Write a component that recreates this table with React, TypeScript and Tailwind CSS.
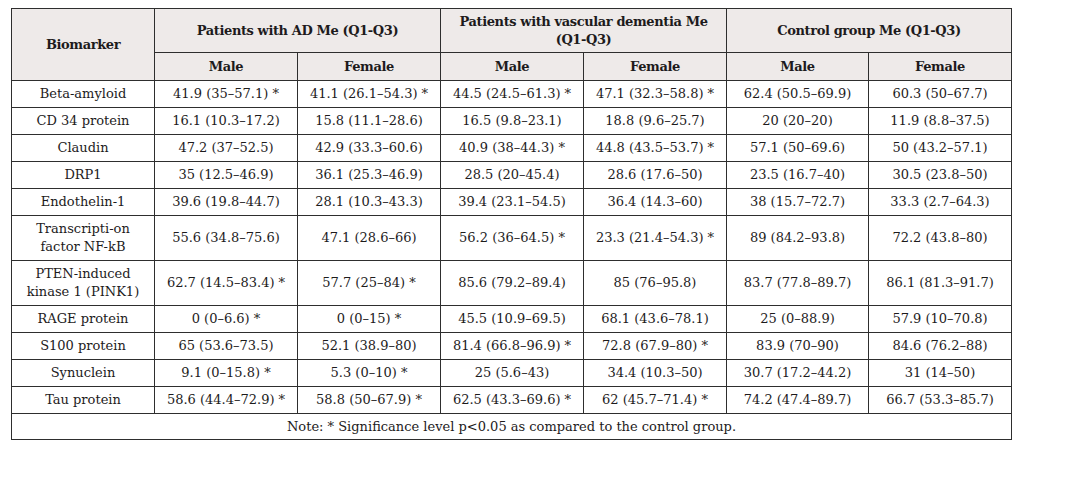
import React from "react";

type Row = { name: React.ReactNode; values: string[] };

const rows: Row[] = [
  {
    name: "Beta-amyloid",
    values: ["41.9 (35–57.1) *", "41.1 (26.1–54.3) *", "44.5 (24.5–61.3) *", "47.1 (32.3–58.8) *", "62.4 (50.5–69.9)", "60.3 (50–67.7)"],
  },
  {
    name: "CD 34 protein",
    values: ["16.1 (10.3–17.2)", "15.8 (11.1–28.6)", "16.5 (9.8–23.1)", "18.8 (9.6–25.7)", "20 (20–20)", "11.9 (8.8–37.5)"],
  },
  {
    name: "Claudin",
    values: ["47.2 (37–52.5)", "42.9 (33.3–60.6)", "40.9 (38–44.3) *", "44.8 (43.5–53.7) *", "57.1 (50–69.6)", "50 (43.2–57.1)"],
  },
  {
    name: "DRP1",
    values: ["35 (12.5–46.9)", "36.1 (25.3–46.9)", "28.5 (20–45.4)", "28.6 (17.6–50)", "23.5 (16.7–40)", "30.5 (23.8–50)"],
  },
  {
    name: "Endothelin-1",
    values: ["39.6 (19.8–44.7)", "28.1 (10.3–43.3)", "39.4 (23.1–54.5)", "36.4 (14.3–60)", "38 (15.7–72.7)", "33.3 (2.7–64.3)"],
  },
  {
    name: (
      <>
        Transcripti-on
        <br />
        factor NF-kB
      </>
    ),
    values: ["55.6 (34.8–75.6)", "47.1 (28.6–66)", "56.2 (36–64.5) *", "23.3 (21.4–54.3) *", "89 (84.2–93.8)", "72.2 (43.8–80)"],
  },
  {
    name: (
      <>
        PTEN-induced
        <br />
        kinase 1 (PINK1)
      </>
    ),
    values: ["62.7 (14.5–83.4) *", "57.7 (25–84) *", "85.6 (79.2–89.4)", "85 (76–95.8)", "83.7 (77.8–89.7)", "86.1 (81.3–91.7)"],
  },
  {
    name: "RAGE protein",
    values: ["0 (0–6.6) *", "0 (0–15) *", "45.5 (10.9–69.5)", "68.1 (43.6–78.1)", "25 (0–88.9)", "57.9 (10–70.8)"],
  },
  {
    name: "S100 protein",
    values: ["65 (53.6–73.5)", "52.1 (38.9–80)", "81.4 (66.8–96.9) *", "72.8 (67.9–80) *", "83.9 (70–90)", "84.6 (76.2–88)"],
  },
  {
    name: "Synuclein",
    values: ["9.1 (0–15.8) *", "5.3 (0–10) *", "25 (5.6–43)", "34.4 (10.3–50)", "30.7 (17.2–44.2)", "31 (14–50)"],
  },
  {
    name: "Tau protein",
    values: ["58.6 (44.4–72.9) *", "58.8 (50–67.9) *", "62.5 (43.3–69.6) *", "62 (45.7–71.4) *", "74.2 (47.4–89.7)", "66.7 (53.3–85.7)"],
  },
];

// body cells: 18px line + 8px padding + border = 27px row
const cell = "border border-[#2e2e2e] px-1 py-[4px] text-center align-middle";
const head = "border border-[#2e2e2e] px-1 text-center align-middle bg-[#eeeae9] font-bold tracking-[-0.03em]";

export default function App() {
  return (
    <div className="min-h-screen bg-white pt-[8px] pl-[11px] font-['DejaVu_Serif',serif] text-[13px] leading-[18px] text-[#1d1b1c]">
      <table className="w-[1000px] table-fixed border-collapse">
        <colgroup>
          <col className="w-[143px]" />
          <col className="w-[143px]" />
          <col className="w-[143px]" />
          <col className="w-[143px]" />
          <col className="w-[143px]" />
          <col className="w-[142px]" />
          <col className="w-[143px]" />
        </colgroup>
        <thead>
          <tr>
            <th rowSpan={2} className={head + " py-[3.5px]"}>
              Biomarker
            </th>
            <th colSpan={2} className={head + " py-[3.5px]"}>
              Patients with AD Me (Q1-Q3)
            </th>
            <th colSpan={2} className={head + " py-[3.5px]"}>
              Patients with vascular dementia Me (Q1-Q3)
            </th>
            <th colSpan={2} className={head + " py-[3.5px]"}>
              Control group Me (Q1-Q3)
            </th>
          </tr>
          <tr>
            <th className={head + " py-[4.5px]"}>Male</th>
            <th className={head + " py-[4.5px]"}>Female</th>
            <th className={head + " py-[4.5px]"}>Male</th>
            <th className={head + " py-[4.5px]"}>Female</th>
            <th className={head + " py-[4.5px]"}>Male</th>
            <th className={head + " py-[4.5px]"}>Female</th>
          </tr>
        </thead>
        <tbody>
          {rows.map((row, i) => (
            <tr key={i}>
              <td className={cell}>{row.name}</td>
              {row.values.map((v, j) => (
                <td key={j} className={cell}>
                  {v}
                </td>
              ))}
            </tr>
          ))}
          <tr>
            <td colSpan={7} className="border border-[#2e2e2e] px-1 py-[3.5px] text-center align-middle">
              Note: * Significance level p&lt;0.05 as compared to the control group.
            </td>
          </tr>
        </tbody>
      </table>
    </div>
  );
}
